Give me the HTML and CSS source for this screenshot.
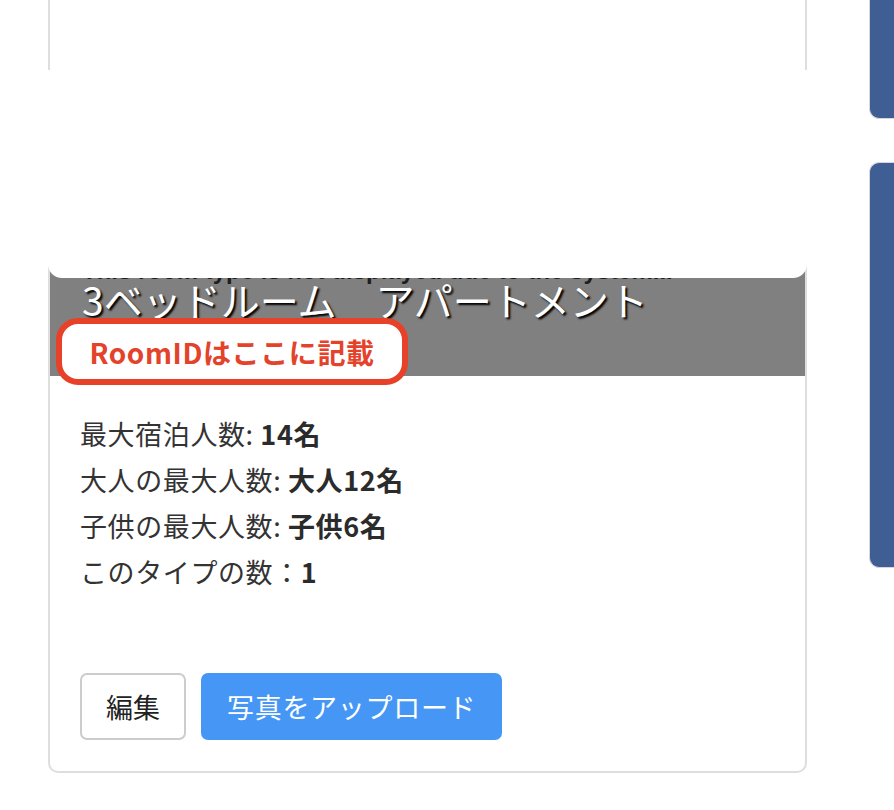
FILE: index.html
```html
<!DOCTYPE html>
<html lang="ja">
<head>
  <meta charset="UTF-8" />
  <title>Room types</title>
  <link rel="stylesheet" href="styles.css">
</head>
<body>
  <div class="page">
    <div class="card">
      <div class="cover">
        <div class="band">
          <div class="notice">This room type is not displayed due to the system...</div>
          <div class="title">3ベッドルーム　アパートメント</div>
          <div class="callout">RoomIDはここに記載</div>
        </div>
        <div class="overlay"></div>
      </div>

      <div class="details">
        <div class="line">最大宿泊人数: <b>14名</b></div>
        <div class="line">大人の最大人数: <b>大人12名</b></div>
        <div class="line">子供の最大人数: <b>子供6名</b></div>
        <div class="line">このタイプの数：<b>1</b></div>
      </div>

      <div class="actions">
        <button class="btn btn-edit">編集</button>
        <button class="btn btn-upload">写真をアップロード</button>
      </div>
    </div>

    <div class="side">
      <div class="panel panel-top"></div>
      <div class="panel panel-main"></div>
    </div>
  </div>
</body>
</html>
```

FILE: styles.css
```css
body {
  margin: 0;
  background: #fff;
  font-family: "Noto Sans CJK JP", "Noto Sans", sans-serif;
  color: #333;
  overflow: hidden;
}
.page {
  display: flex;
  align-items: flex-start;
  gap: 62px;
  padding-left: 48px;
}
.card {
  width: 755px;
  flex-shrink: 0;
  border: 2px solid #dedede;
  border-top: none;
  border-radius: 0 0 10px 10px;
}
.cover {
  position: relative;
  height: 376px;
  display: flex;
  flex-direction: column;
  justify-content: flex-end;
}
.band {
  position: relative;
  height: 190px;
  background: #808080;
  padding: 0 32px;
  box-sizing: border-box;
}
.notice {
  margin-top: 70px;
  font-family: "Liberation Sans", sans-serif;
  font-size: 24px;
  font-weight: bold;
  line-height: 30px;
  color: #1e1e1e;
  white-space: nowrap;
  overflow: hidden;
}
.title {
  margin-top: -10px;
  font-size: 39px;
  line-height: 46px;
  color: #fff;
  text-shadow: 2px 2px 2px #000;
  white-space: nowrap;
}
.callout {
  position: absolute;
  left: 6px;
  top: 132px;
  width: 352px;
  height: 67px;
  box-sizing: border-box;
  border: 6px solid #e8412a;
  border-radius: 22px;
  background: #fff;
  color: #e4432b;
  font-size: 28px;
  font-weight: bold;
  letter-spacing: 0.6px;
  display: flex;
  align-items: center;
  justify-content: center;
}
.overlay {
  position: absolute;
  left: -2px;
  right: -2px;
  top: 70px;
  height: 208px;
  background: #fff;
  border-radius: 0 0 14px 14px;
}
.details {
  padding: 35px 30px 0;
}
.line {
  font-size: 27px;
  line-height: 46px;
  letter-spacing: 0.6px;
  color: #333;
}
.line b {
  font-weight: bold;
  color: #2b2b2b;
}
.actions {
  display: flex;
  gap: 15px;
  padding: 78px 30px 31px;
}
.btn {
  font-family: "Noto Sans CJK JP", "Noto Sans", sans-serif;
  font-size: 27px;
  height: 67px;
  border-radius: 7px;
  padding: 0 24px;
  cursor: pointer;
}
.btn-edit {
  background: #fff;
  color: #222;
  border: 2px solid #cccccc;
}
.btn-upload {
  background: #4697f5;
  color: #fff;
  border: none;
  padding: 0 26px;
  letter-spacing: 0.7px;
}
.side {
  display: flex;
  flex-direction: column;
  gap: 43px;
  width: 60px;
  flex-shrink: 0;
}
.panel {
  background: #3f5e94;
  border: 1px solid #d6d6dc;
  border-right: none;
}
.panel-top {
  height: 118px;
  border-top: none;
  border-radius: 0 0 0 10px;
}
.panel-main {
  height: 404px;
  border-radius: 10px 0 0 10px;
}
```
